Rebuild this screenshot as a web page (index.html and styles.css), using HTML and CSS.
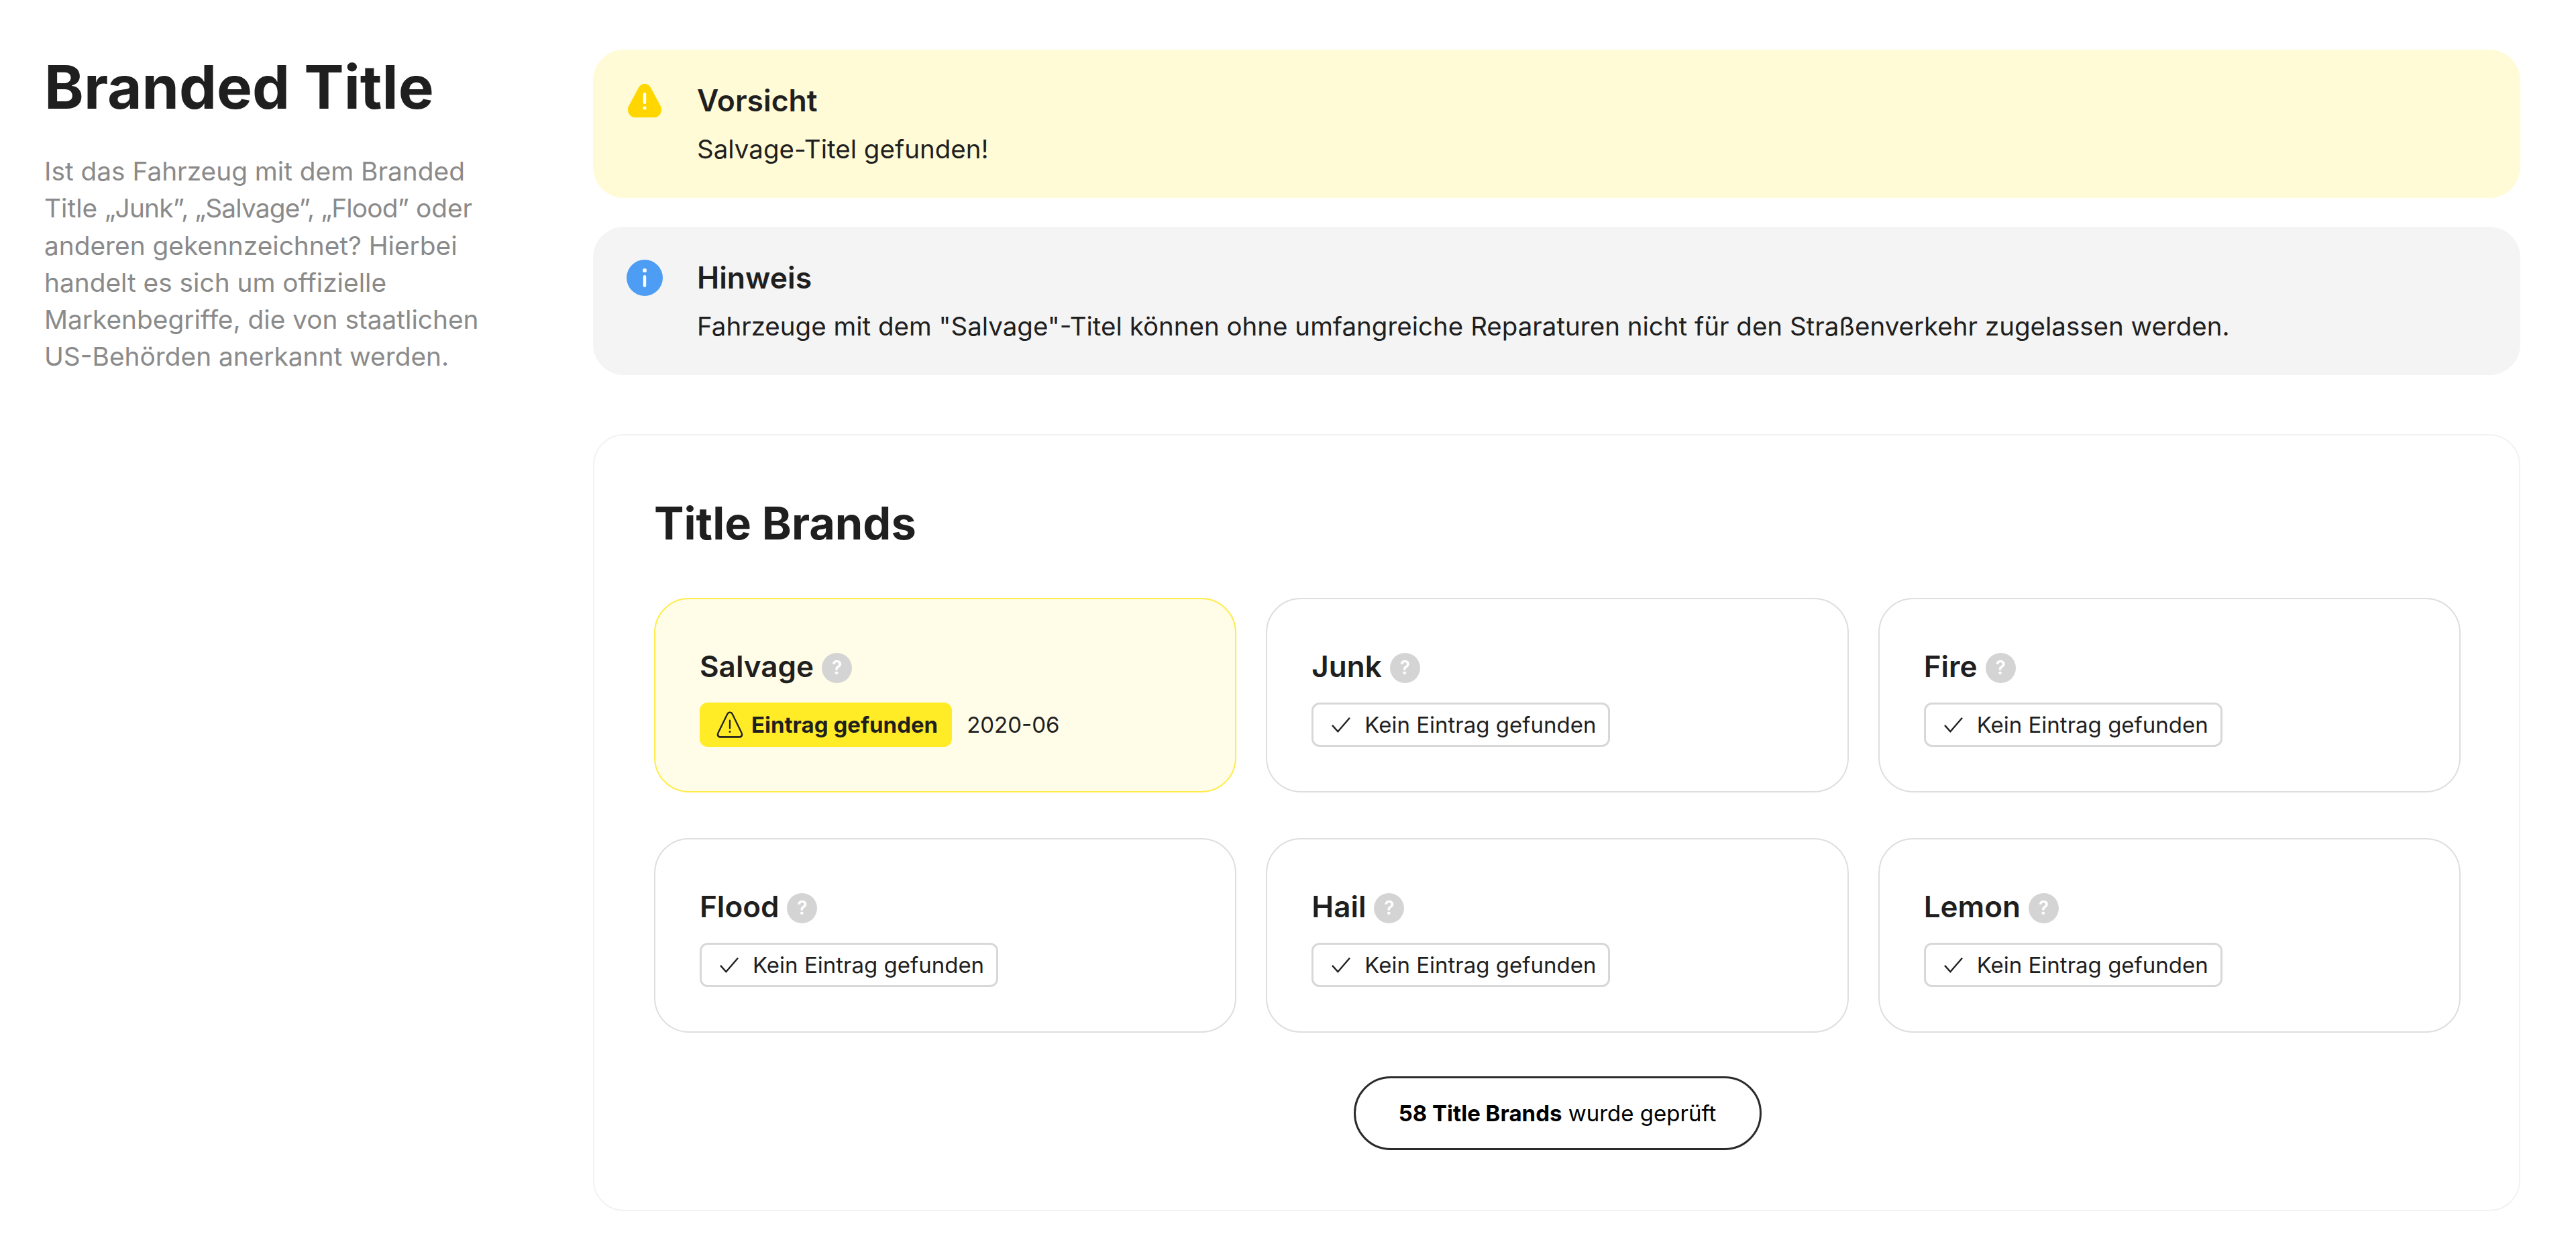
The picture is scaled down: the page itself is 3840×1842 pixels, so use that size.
FILE: index.html
```html
<!DOCTYPE html>
<html lang="de">
<head>
    <meta charset="UTF-8">
    <meta name="viewport" content="width=device-width, initial-scale=1.0">
    <title>Branded Title</title>
    <link rel="stylesheet" href="styles.css">
</head>
<body>
    <div class="page">
        <aside class="intro">
            <h1>Branded Title</h1>
            <p>Ist das Fahrzeug mit dem Branded<br>Title <span class="quoted">„Junk”, „Salvage”, „Flood”</span> oder<br>anderen gekennzeichnet? Hierbei handelt es sich um offizielle Markenbegriffe, die von staatlichen US-Behörden anerkannt werden.</p>
        </aside>
        <main class="content">
            <div class="alert alert-warning">
                <svg class="alert-icon" viewBox="0 0 54 54"><path d="M27 2c4 0 7 2 9 5.500l14.500 27c4 7-.5 17.500-9 17.500H12.500c-8.500 0-13-10.500-9-17.500L18 7.500C20 4 23 2 27 2z" fill="#ffd600"/><rect x="24.800" y="15" width="4.400" height="17" rx="2.200" fill="#fff"/><circle cx="27" cy="38" r="2.500" fill="#fff"/></svg>
                <div>
                    <h3>Vorsicht</h3>
                    <p>Salvage-Titel gefunden!</p>
                </div>
            </div>
            <div class="alert alert-info">
                <svg class="alert-icon" viewBox="0 0 54 54"><circle cx="27" cy="27" r="27" fill="#4d9df5"/><circle cx="27" cy="16" r="3" fill="#fff"/><rect x="24.800" y="23" width="4.400" height="18" rx="2.200" fill="#fff"/></svg>
                <div>
                    <h3>Hinweis</h3>
                    <p>Fahrzeuge mit dem "Salvage"-Titel können ohne umfangreiche Reparaturen nicht für den Straßenverkehr zugelassen werden.</p>
                </div>
            </div>
            <section class="brands">
                <h2>Title Brands</h2>
                <div class="brand-grid">
                    <div class="brand brand-found">
                        <div class="brand-name">Salvage <span class="help">?</span></div>
                        <div class="brand-status">
                            <span class="chip chip-found">
                                <svg class="chip-warn" viewBox="0 0 40 40"><path d="M20 2.500c1.600 0 2.800 1 3.600 2.500l13.200 27c1.300 2.800-.2 5.500-3 5.500H6.200c-2.800 0-4.300-2.700-3-5.500L16.400 5c.8-1.500 2-2.500 3.600-2.500z" fill="none" stroke="#1f1f1f" stroke-width="2.200" stroke-linejoin="round"/><path d="M2.800 33.500c.5 2.300 1.800 4 3.400 4h27.600c1.600 0 2.900-1.700 3.400-4" fill="none" stroke="#1f1f1f" stroke-width="2.200"/><path d="M20 14v11" stroke="#1f1f1f" stroke-width="2.200" stroke-linecap="round"/><circle cx="20" cy="30" r="1.400" fill="#1f1f1f"/></svg>
                                Eintrag gefunden
                            </span>
                            <span class="date">2020-06</span>
                        </div>
                    </div>
                    <div class="brand">
                        <div class="brand-name">Junk <span class="help">?</span></div>
                        <div class="brand-status">
                            <span class="chip"><svg class="chip-check" viewBox="0 0 32 28"><path d="M2 15l9 10L30 3" fill="none" stroke="#1f1f1f" stroke-width="2.600"/></svg>Kein Eintrag gefunden</span>
                        </div>
                    </div>
                    <div class="brand">
                        <div class="brand-name">Fire <span class="help">?</span></div>
                        <div class="brand-status">
                            <span class="chip"><svg class="chip-check" viewBox="0 0 32 28"><path d="M2 15l9 10L30 3" fill="none" stroke="#1f1f1f" stroke-width="2.600"/></svg>Kein Eintrag gefunden</span>
                        </div>
                    </div>
                    <div class="brand">
                        <div class="brand-name">Flood <span class="help">?</span></div>
                        <div class="brand-status">
                            <span class="chip"><svg class="chip-check" viewBox="0 0 32 28"><path d="M2 15l9 10L30 3" fill="none" stroke="#1f1f1f" stroke-width="2.600"/></svg>Kein Eintrag gefunden</span>
                        </div>
                    </div>
                    <div class="brand">
                        <div class="brand-name">Hail <span class="help">?</span></div>
                        <div class="brand-status">
                            <span class="chip"><svg class="chip-check" viewBox="0 0 32 28"><path d="M2 15l9 10L30 3" fill="none" stroke="#1f1f1f" stroke-width="2.600"/></svg>Kein Eintrag gefunden</span>
                        </div>
                    </div>
                    <div class="brand">
                        <div class="brand-name">Lemon <span class="help">?</span></div>
                        <div class="brand-status">
                            <span class="chip"><svg class="chip-check" viewBox="0 0 32 28"><path d="M2 15l9 10L30 3" fill="none" stroke="#1f1f1f" stroke-width="2.600"/></svg>Kein Eintrag gefunden</span>
                        </div>
                    </div>
                </div>
                <div class="checked-wrap">
                    <button class="checked"><b>58 Title Brands</b> wurde geprüft</button>
                </div>
            </section>
        </main>
    </div>
</body>
</html>
```

FILE: styles.css
```css
body {
    margin: 0;
    background-color: white;
    font-family: Inter, "Liberation Sans", sans-serif;
    color: #1f1f1f;
}
.page {
    display: flex;
    padding: 74px 83px 36px 66px;
}
.intro {
    width: 818px;
    flex-shrink: 0;
}
.intro h1 {
    margin: 0;
    font-size: 89px;
    line-height: 112px;
    font-weight: 700;
}
.intro p {
    margin: 41px 0 0;
    width: 670px;
    font-size: 38.8px;
    line-height: 55.3px;
    color: #8a8a8a;
}
.quoted {
    letter-spacing: -0.8px;
}
.content {
    flex: 1;
    min-width: 0;
}
.alert {
    display: flex;
    gap: 51px;
    height: 221px;
    box-sizing: border-box;
    padding: 44px 50px;
    margin-bottom: 43px;
    border-radius: 46px;
}
.alert-warning {
    background-color: #fffbd6;
}
.alert-info {
    background-color: #f4f4f4;
}
.alert-icon {
    width: 54px;
    height: 54px;
    flex-shrink: 0;
    margin-top: 5px;
}
.alert h3 {
    margin: 0 0 10px;
    font-size: 44.5px;
    line-height: 64px;
    font-weight: 600;
}
.alert p {
    margin: 0;
    font-size: 38.5px;
    line-height: 60px;
}
.brands {
    margin-top: 88px;
    padding: 91px 87px 89px 89px;
    border: 2px solid #f2f2f2;
    border-radius: 46px;
}
.brands h2 {
    margin: 0 0 71px;
    font-size: 66.7px;
    line-height: 80px;
    font-weight: 700;
}
.brand-grid {
    display: grid;
    grid-template-columns: repeat(3, 1fr);
    gap: 68px 44px;
}
.brand {
    padding: 68px 66px;
    height: 290px;
    box-sizing: border-box;
    border: 2px solid #dedede;
    border-radius: 52px;
}
.brand-found {
    background-color: #fffce8;
    border-color: #ffec4a;
}
.brand-name {
    display: flex;
    align-items: center;
    gap: 12px;
    height: 70px;
    margin-bottom: 19px;
    margin-top: -3px;
    font-size: 44px;
    font-weight: 600;
}
.help {
    display: inline-flex;
    align-items: center;
    justify-content: center;
    width: 45px;
    height: 45px;
    margin-top: 4px;
    border-radius: 50%;
    background-color: #d4d4d4;
    color: white;
    font-size: 28px;
    font-weight: 600;
}
.brand-status {
    display: flex;
    align-items: center;
    gap: 22px;
}
.chip {
    display: inline-flex;
    align-items: center;
    height: 66px;
    box-sizing: border-box;
    padding: 0 18px 0 26px;
    border: 3px solid #d8d8d8;
    border-radius: 12px;
    font-size: 33px;
}
.chip-found {
    gap: 11px;
    padding: 0 21px 0 24px;
    border: none;
    background-color: #ffec27;
    font-weight: 700;
}
.chip-check {
    width: 30px;
    height: 26px;
    margin-right: 20px;
}
.chip-warn {
    width: 42px;
    height: 42px;
}
.date {
    font-size: 33px;
}
.checked-wrap {
    display: flex;
    justify-content: center;
    margin-top: 65px;
}
.checked {
    width: 608px;
    height: 110px;
    border: 3px solid #2b2b2b;
    border-radius: 55px;
    background-color: white;
    color: black;
    font-family: inherit;
    font-size: 33px;
}
.checked b {
    font-weight: 700;
}
```
